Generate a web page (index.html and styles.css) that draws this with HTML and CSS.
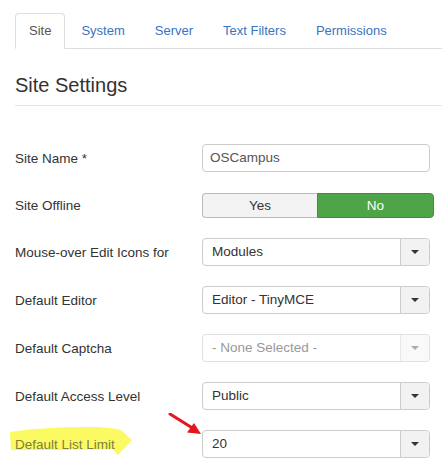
FILE: index.html
```html
<!DOCTYPE html>
<html>
<head>
<meta charset="utf-8">
<link rel="stylesheet" href="styles.css">
</head>
<body>
<div class="page">
  <ul class="tabs">
    <li class="tab active"><a>Site</a></li>
    <li class="tab"><a>System</a></li>
    <li class="tab"><a>Server</a></li>
    <li class="tab"><a>Text Filters</a></li>
    <li class="tab"><a>Permissions</a></li>
  </ul>
  <h2 class="legend">Site Settings</h2>
  <div class="form">
    <div class="row">
      <label class="lbl">Site Name *</label>
      <div class="input">OSCampus</div>
    </div>
    <div class="row row-toggle">
      <label class="lbl">Site Offline</label>
      <div class="toggle">
        <span class="opt opt-yes">Yes</span>
        <span class="opt opt-no">No</span>
      </div>
    </div>
    <div class="row">
      <label class="lbl">Mouse-over Edit Icons for</label>
      <div class="select"><span class="val">Modules</span><span class="btn"><i class="caret"></i></span></div>
    </div>
    <div class="row">
      <label class="lbl">Default Editor</label>
      <div class="select"><span class="val">Editor - TinyMCE</span><span class="btn"><i class="caret"></i></span></div>
    </div>
    <div class="row">
      <label class="lbl">Default Captcha</label>
      <div class="select disabled"><span class="val">- None Selected -</span><span class="btn"><i class="caret"></i></span></div>
    </div>
    <div class="row">
      <label class="lbl">Default Access Level</label>
      <div class="select"><span class="val">Public</span><span class="btn"><i class="caret"></i></span></div>
    </div>
    <div class="row">
      <label class="lbl lbl-hl">
        <svg class="highlight" width="126" height="32" viewBox="0 0 126 32">
          <path d="M2 7 C20 4 50 2 82 2 C96 2 106 3 113 5 L124 15 L110 30 L104 24 C80 25 40 25 3 25 Z" fill="#fbfa62"/>
        </svg>
        <span class="hl-text">Default List Limit</span>
      </label>
      <div class="select"><span class="val">20</span><span class="btn"><i class="caret"></i></span></div>
    </div>
  </div>
  <svg class="arrow" width="40" height="26" viewBox="0 0 40 26">
    <line x1="2" y1="1" x2="26" y2="16" stroke="#e8141b" stroke-width="3" stroke-linecap="round"/>
    <polygon points="33,21 19,19.5 26,10" fill="#e8141b"/>
  </svg>
</div>
</body>
</html>
```
FILE: styles.css
```css
html, body {
  margin: 0;
  padding: 0;
  background: #fff;
}
body {
  font-family: "Liberation Sans", Arial, sans-serif;
  font-size: 13.5px;
  color: #333;
}
.page {
  position: relative;
  padding: 13px 0 0 15px;
}
.tabs {
  list-style: none;
  margin: 0;
  padding: 0;
  display: flex;
  border-bottom: 1px solid #ddd;
  font-size: 13px;
}
.tab {
  margin-right: 2px;
  margin-bottom: -1px;
}
.tab a {
  display: block;
  padding: 8px 13px;
  line-height: 18px;
  border: 1px solid transparent;
  border-radius: 4px 4px 0 0;
  color: #3a73c0;
}
.tab.active a {
  color: #555;
  border-color: #ddd;
  border-bottom-color: #fff;
  background: #fff;
}
.legend {
  margin: 16px 0 38px 0;
  font-size: 20px;
  font-weight: normal;
  line-height: 40px;
  color: #333;
  border-bottom: 1px solid #e5e5e5;
}
.form {
  display: flex;
  flex-direction: column;
  gap: 20px;
}
.row {
  display: flex;
  align-items: center;
  height: 28px;
}
.row-toggle {
  height: 26px;
}
.lbl {
  width: 187px;
  flex: none;
  color: #333;
}
.input {
  box-sizing: border-box;
  width: 228px;
  height: 28px;
  border: 1px solid #ccc;
  border-radius: 4px;
  padding: 0 7px;
  line-height: 26px;
  font-size: 13.5px;
  color: #555;
}
.toggle {
  display: flex;
  width: 232px;
  height: 25px;
}
.opt {
  box-sizing: border-box;
  display: flex;
  align-items: center;
  justify-content: center;
  font-size: 13.5px;
}
.opt-yes {
  width: 115px;
  background: #f3f3f3;
  border: 1px solid #bbb;
  border-right: none;
  border-radius: 4px 0 0 4px;
  color: #333;
}
.opt-no {
  width: 117px;
  background: #4ea447;
  border: 1px solid #3f8f3a;
  border-radius: 0 4px 4px 0;
  color: #fff;
}
.select {
  box-sizing: border-box;
  display: flex;
  width: 228px;
  height: 28px;
  border: 1px solid #ccc;
  border-radius: 4px;
  background: #fff;
  overflow: hidden;
}
.select .val {
  flex: 1;
  padding-left: 9px;
  line-height: 26px;
  font-size: 13.5px;
  color: #333;
}
.select .btn {
  width: 28px;
  border-left: 1px solid #ccc;
  background: #f2f2f2;
  display: flex;
  align-items: center;
  justify-content: center;
}
.caret {
  width: 0;
  height: 0;
  border-left: 4px solid transparent;
  border-right: 4px solid transparent;
  border-top: 4px solid #333;
}
.select.disabled {
  border-color: #e0e0e0;
}
.select.disabled .val {
  color: #999;
}
.select.disabled .btn {
  background: #f9f9f9;
  border-left-color: #e6e6e6;
}
.select.disabled .caret {
  border-top-color: #aaa;
}
.lbl-hl {
  position: relative;
}
.highlight {
  position: absolute;
  left: -7px;
  top: -12px;
}
.hl-text {
  position: relative;
  color: #80803a;
}
.arrow {
  position: absolute;
  left: 168px;
  top: 413px;
}
```
